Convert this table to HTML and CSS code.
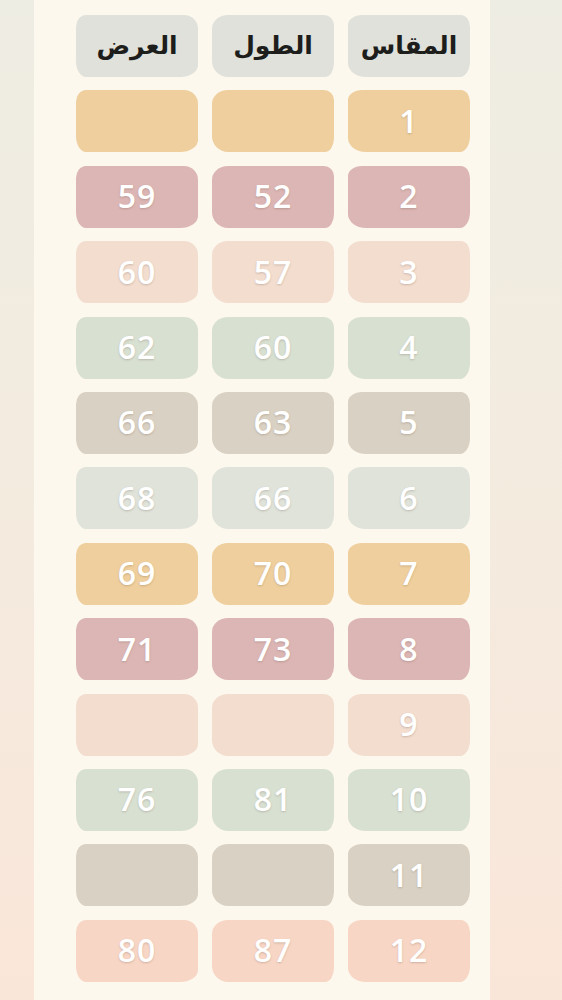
FILE: index.html
```html
<!DOCTYPE html>
<html lang="ar">
<head>
    <meta charset="UTF-8">
    <meta name="viewport" content="width=device-width, initial-scale=1.0">
    <title>جدول المقاسات</title>
    <link rel="stylesheet" href="styles.css">
</head>
<body>

<div class="sheet">
    <div class="size-grid" dir="rtl">
        <!-- العناوين -->
        <div class="cell head">المقاس</div>
        <div class="cell head">الطول</div>
        <div class="cell head">العرض</div>

        <div class="cell c-yellow">1</div>
        <div class="cell c-yellow"></div>
        <div class="cell c-yellow"></div>

        <div class="cell c-pink">2</div>
        <div class="cell c-pink">52</div>
        <div class="cell c-pink">59</div>

        <div class="cell c-peach">3</div>
        <div class="cell c-peach">57</div>
        <div class="cell c-peach">60</div>

        <div class="cell c-green">4</div>
        <div class="cell c-green">60</div>
        <div class="cell c-green">62</div>

        <div class="cell c-taupe">5</div>
        <div class="cell c-taupe">63</div>
        <div class="cell c-taupe">66</div>

        <div class="cell c-grey">6</div>
        <div class="cell c-grey">66</div>
        <div class="cell c-grey">68</div>

        <div class="cell c-yellow">7</div>
        <div class="cell c-yellow">70</div>
        <div class="cell c-yellow">69</div>

        <div class="cell c-pink">8</div>
        <div class="cell c-pink">73</div>
        <div class="cell c-pink">71</div>

        <div class="cell c-peach">9</div>
        <div class="cell c-peach"></div>
        <div class="cell c-peach"></div>

        <div class="cell c-green">10</div>
        <div class="cell c-green">81</div>
        <div class="cell c-green">76</div>

        <div class="cell c-taupe">11</div>
        <div class="cell c-taupe"></div>
        <div class="cell c-taupe"></div>

        <div class="cell c-salmon">12</div>
        <div class="cell c-salmon">87</div>
        <div class="cell c-salmon">80</div>
    </div>
</div>

</body>
</html>
```

FILE: styles.css
```css
html, body {
    height: 100%;
}
body {
    margin: 0;
    padding: 0 72px 0 34px;
    background: linear-gradient(to bottom, #eeede3 0%, #f4ebdf 50%, #fae6d9 100%);
    font-family: "Open Sans", "DejaVu Sans", sans-serif;
}
/* الورقة */
.sheet {
    height: 1000px;
    background-color: #fdf8ee;
    padding: 15px 20px 0 43px;
    box-sizing: border-box;
}
.size-grid {
    display: grid;
    grid-template-columns: repeat(3, 122px);
    grid-auto-rows: 62px;
    column-gap: 14px;
    row-gap: 13.4px;
}
/* الخانات */
.cell {
    display: flex;
    align-items: center;
    justify-content: center;
    padding-bottom: 2px;
    box-sizing: border-box;
    border-radius: 14px 9px 10px 18px / 10px 12px 16px 14px;
    color: #fff;
    font-size: 32px;
    font-weight: 600;
    letter-spacing: 1px;
    text-shadow: 0 1px 2px rgba(90, 70, 60, 0.25);
}
.cell:nth-child(3n+2) {
    border-radius: 16px 10px 9px 16px / 14px 10px 14px 16px;
}
.cell:nth-child(3n) {
    border-radius: 10px 14px 18px 10px / 12px 14px 12px 16px;
}
.head {
    background-color: #dfe1da;
    color: #1d1d1b;
    font-family: "DejaVu Sans", sans-serif;
    font-size: 25px;
    font-weight: 700;
    letter-spacing: 0;
    text-shadow: none;
}
.c-yellow { background-color: #efcf9d; }
.c-pink   { background-color: #dcb6b4; }
.c-peach  { background-color: #f2ddcf; }
.c-green  { background-color: #d8e0d2; }
.c-taupe  { background-color: #d9d1c3; }
.c-grey   { background-color: #dfe3da; }
.c-salmon { background-color: #f8d6c5; }
```
